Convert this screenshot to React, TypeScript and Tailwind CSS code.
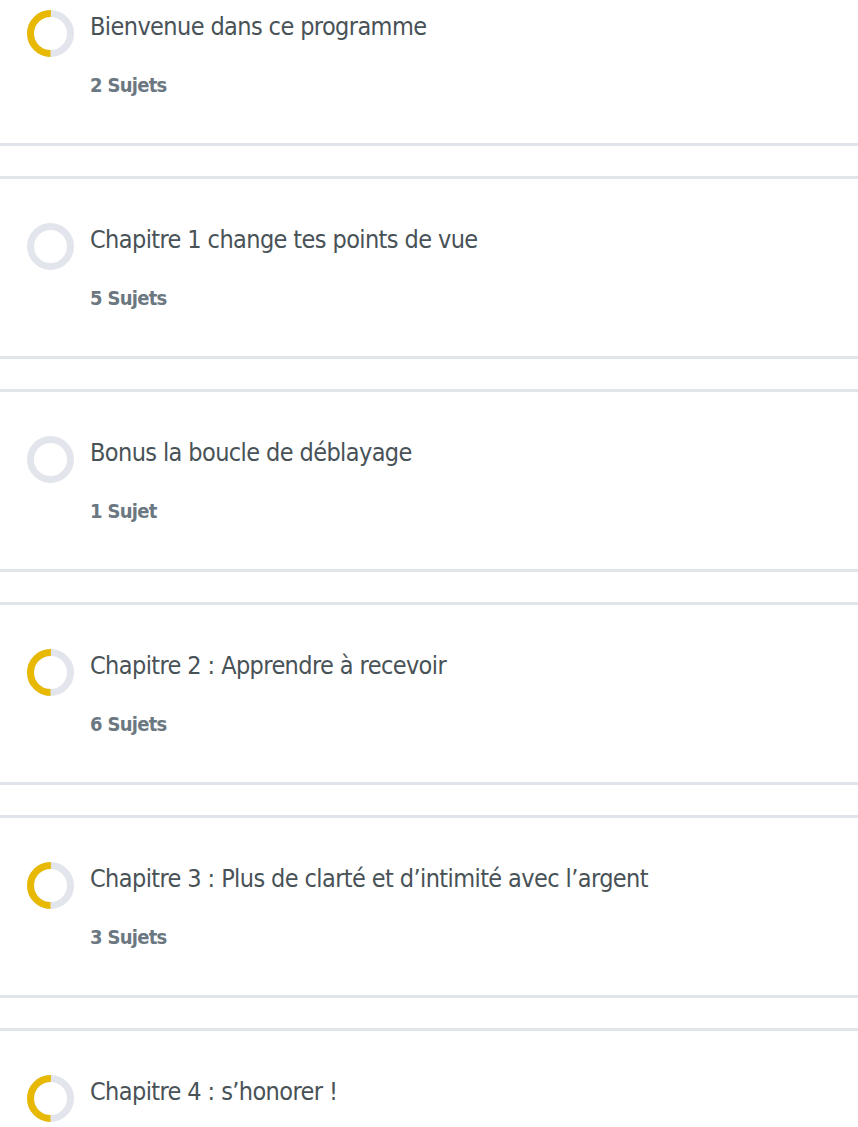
import React from "react";

type Item = { title: string; count: string; progress: number };

const items: Item[] = [
  { title: "Bienvenue dans ce programme", count: "2 Sujets", progress: 50 },
  { title: "Chapitre 1 change tes points de vue", count: "5 Sujets", progress: 0 },
  { title: "Bonus la boucle de déblayage", count: "1 Sujet", progress: 0 },
  { title: "Chapitre 2 : Apprendre à recevoir", count: "6 Sujets", progress: 50 },
  { title: "Chapitre 3 : Plus de clarté et d’intimité avec l’argent", count: "3 Sujets", progress: 50 },
  { title: "Chapitre 4 : s’honorer !", count: "4 Sujets", progress: 50 },
];

function Ring({ progress }: { progress: number }) {
  const r = 20;
  const c = 2 * Math.PI * r;
  return (
    <svg width="47" height="47" viewBox="0 0 47 47" className="shrink-0">
      <circle cx="23.5" cy="23.5" r={r} fill="none" stroke="#e3e5ec" strokeWidth="7" />
      {progress > 0 && (
        <circle
          cx="23.5"
          cy="23.5"
          r={r}
          fill="none"
          stroke="#e8b902"
          strokeWidth="7"
          strokeDasharray={`${(c * progress) / 100} ${c}`}
          transform="rotate(90 23.5 23.5)"
        />
      )}
    </svg>
  );
}

export default function App() {
  return (
    <div
      className="w-[858px] h-[1127px] overflow-hidden bg-white"
      style={{ fontFamily: '"DejaVu Sans Condensed", "Liberation Sans", sans-serif' }}
    >
      <div className="-mt-[37px] flex flex-col gap-[30px]">
        {items.map((it) => (
          <div key={it.title} className="border-y-[3px] border-[#e2e4eb] pt-[44px] pb-[44px] pl-[27px] flex gap-[16px]">
            <Ring progress={it.progress} />
            <div className="flex flex-col">
              <div className="text-[25px] leading-[34px] text-[#485257] tracking-[-0.6px]">{it.title}</div>
              <div className="mt-[27px] text-[20px] leading-[28px] font-bold text-[#6b7881] tracking-[-0.7px]">{it.count}</div>
            </div>
          </div>
        ))}
      </div>
    </div>
  );
}
